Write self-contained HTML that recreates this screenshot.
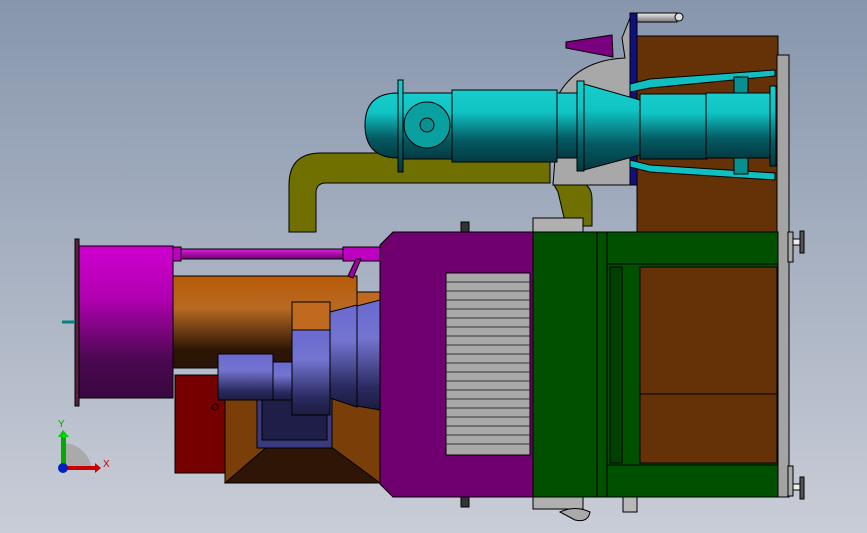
<!DOCTYPE html>
<html><head><meta charset="utf-8"><style>
html,body{margin:0;padding:0;width:867px;height:533px;overflow:hidden}
svg{display:block}
</style></head><body>
<svg width="867" height="533" viewBox="0 0 867 533" xmlns="http://www.w3.org/2000/svg" stroke="#000" stroke-width="1">
<defs>
<linearGradient id="bg" x1="0" y1="0" x2="0" y2="1"><stop offset="0" stop-color="#8796ad"/><stop offset="1" stop-color="#c9cdd7"/></linearGradient>
<linearGradient id="cy" x1="0" y1="0" x2="0" y2="1"><stop offset="0" stop-color="#17cccc"/><stop offset=".3" stop-color="#10c4c4"/><stop offset=".7" stop-color="#055a62"/><stop offset="1" stop-color="#033a42"/></linearGradient>
<linearGradient id="mg" x1="0" y1="0" x2="0" y2="1"><stop offset="0" stop-color="#d000d0"/><stop offset=".35" stop-color="#b000b0"/><stop offset=".75" stop-color="#4a0850"/><stop offset="1" stop-color="#3a0840"/></linearGradient>
<linearGradient id="or" x1="0" y1="0" x2="0" y2="1"><stop offset="0" stop-color="#b85a08"/><stop offset=".35" stop-color="#b86a22"/><stop offset=".8" stop-color="#2e1505"/><stop offset="1" stop-color="#2a1408"/></linearGradient>
<linearGradient id="bl" x1="0" y1="0" x2="0" y2="1"><stop offset="0" stop-color="#6a6ad0"/><stop offset=".35" stop-color="#7474d0"/><stop offset=".8" stop-color="#2a2a60"/><stop offset="1" stop-color="#1c1c40"/></linearGradient>
<linearGradient id="rod" x1="0" y1="0" x2="0" y2="1"><stop offset="0" stop-color="#e020e0"/><stop offset="1" stop-color="#700070"/></linearGradient>
<linearGradient id="pin" x1="0" y1="0" x2="0" y2="1"><stop offset="0" stop-color="#eee"/><stop offset="1" stop-color="#777"/></linearGradient>
</defs>
<rect width="867" height="533" fill="url(#bg)" stroke="none"/>

<path d="M289 232 V185 Q289 153 321 153 H550 V183 H326 Q316 183 316 193 V232 Z" fill="#707000"/>
<path d="M553 183 H578 Q592 183 592 200 V226 H566 L558 192 Z" fill="#707000"/>

<path d="M560 92 Q580 60 625 58 L622 38 L632 13 H637 V185 H553 Z" fill="#a8a8a8"/>
<polygon points="566,42 612,35 613,57 566,48" fill="#7a0080"/>
<rect x="637" y="13" width="40" height="9" fill="url(#pin)"/>
<circle cx="679" cy="17" r="4" fill="#ddd"/>

<rect x="637" y="36" width="141" height="200" fill="#653208"/>
<rect x="777" y="55" width="12" height="442" fill="#a4a4a4"/>
<rect x="630" y="13" width="7" height="172" fill="#101080"/>

<path d="M398 93 Q365 93 365 125 Q365 158 398 158 Z" fill="url(#cy)"/>
<rect x="398" y="93" width="57" height="66" fill="url(#cy)"/>
<rect x="398" y="80" width="5" height="92" fill="url(#cy)"/>
<circle cx="427" cy="125" r="23" fill="#0aa0a0"/>
<circle cx="427" cy="125" r="7" fill="#0a9090"/>
<rect x="452" y="90" width="105" height="72" fill="url(#cy)"/>
<rect x="557" y="93" width="20" height="65" fill="url(#cy)"/>
<rect x="577" y="81" width="7" height="90" fill="url(#cy)"/>
<polygon points="584,84 640,100 640,155 584,170" fill="url(#cy)"/>
<rect x="640" y="94" width="67" height="65" fill="url(#cy)"/>
<rect x="706" y="93" width="66" height="65" fill="url(#cy)"/>
<rect x="770" y="86" width="6" height="80" fill="url(#cy)"/>
<polygon points="630,84 650,79 775,70 775,76 650,88 630,92" fill="#10c0c0"/>
<polygon points="630,160 650,165 775,173 775,180 650,172 630,167" fill="#10c0c0"/>
<rect x="734" y="77" width="14" height="16" fill="#089090"/>
<rect x="734" y="158" width="14" height="16" fill="#089090"/>

<rect x="75" y="239" width="4" height="167" fill="#5a2040"/>
<rect x="79" y="246" width="94" height="152" fill="url(#mg)"/>
<line x1="62" y1="322" x2="75" y2="322" stroke="#0a8080" stroke-width="3"/>
<rect x="173" y="276" width="184" height="92" fill="url(#or)"/>
<rect x="173" y="249" width="207" height="10" fill="url(#rod)"/>
<rect x="173" y="247" width="8" height="14" fill="#c000c0"/>
<rect x="343" y="247" width="37" height="14" fill="#c000c0"/>
<polygon points="348,276 356,259 361,259 353,278" fill="#a000a0"/>
<rect x="357" y="292" width="23" height="14" fill="#c06a20"/>
<rect x="175" y="375" width="50" height="98" fill="#740000"/>
<circle cx="215" cy="407" r="3" fill="none"/>
<rect x="225" y="368" width="155" height="115" fill="#7a3e08"/>
<polygon points="225,483 268,446 330,446 380,483" fill="#2e1505"/>
<rect x="257" y="398" width="75" height="50" fill="#3a3a80"/>
<rect x="262" y="400" width="65" height="40" fill="#1e1e48"/>
<polygon points="330,312 357,305 357,407 330,398" fill="url(#bl)"/>
<polygon points="357,306 380,300 380,410 357,406" fill="url(#bl)"/>
<rect x="218" y="354" width="55" height="46" fill="url(#bl)"/>
<rect x="273" y="362" width="20" height="38" fill="url(#bl)"/>
<rect x="292" y="330" width="38" height="85" fill="url(#bl)"/>
<rect x="292" y="302" width="38" height="28" fill="#c06a20"/>

<polygon points="393,232 533,232 533,497 393,497 380,484 380,245" fill="#700070"/>
<rect x="446" y="273" width="84" height="182" fill="#a8a8a8"/>
<g stroke="#333" stroke-width="1">
<line x1="446" y1="282" x2="530" y2="282"/><line x1="446" y1="291" x2="530" y2="291"/><line x1="446" y1="300" x2="530" y2="300"/><line x1="446" y1="309" x2="530" y2="309"/><line x1="446" y1="318" x2="530" y2="318"/><line x1="446" y1="327" x2="530" y2="327"/><line x1="446" y1="336" x2="530" y2="336"/><line x1="446" y1="345" x2="530" y2="345"/><line x1="446" y1="354" x2="530" y2="354"/><line x1="446" y1="363" x2="530" y2="363"/><line x1="446" y1="372" x2="530" y2="372"/><line x1="446" y1="381" x2="530" y2="381"/><line x1="446" y1="390" x2="530" y2="390"/><line x1="446" y1="399" x2="530" y2="399"/><line x1="446" y1="408" x2="530" y2="408"/><line x1="446" y1="417" x2="530" y2="417"/><line x1="446" y1="426" x2="530" y2="426"/><line x1="446" y1="435" x2="530" y2="435"/><line x1="446" y1="444" x2="530" y2="444"/>
</g>
<rect x="461" y="222" width="8" height="10" fill="#333"/>
<rect x="461" y="497" width="8" height="10" fill="#333"/>

<rect x="533" y="218" width="50" height="14" fill="#b0b0b0"/>
<rect x="533" y="497" width="50" height="12" fill="#b0b0b0"/>
<path d="M560 512 Q575 505 590 512 Q588 523 575 520 Z" fill="#aaa"/>
<rect x="533" y="232" width="245" height="265" fill="#005000"/>
<rect x="640" y="267" width="137" height="196" fill="#653208"/>
<line x1="640" y1="394" x2="777" y2="394"/>
<rect x="610" y="267" width="12" height="196" fill="#004000"/>
<line x1="597" y1="232" x2="597" y2="497"/><line x1="607" y1="232" x2="607" y2="497"/>
<line x1="607" y1="264" x2="778" y2="264"/><line x1="607" y1="465" x2="778" y2="465"/>
<rect x="623" y="497" width="14" height="15" fill="#b8b8b8"/>
<rect x="788" y="232" width="5" height="30" fill="#aaa"/><rect x="788" y="466" width="5" height="30" fill="#aaa"/>
<rect x="793" y="239" width="8" height="6" fill="#eee"/><rect x="800" y="231" width="4" height="22" fill="#555"/>
<rect x="793" y="484" width="8" height="6" fill="#eee"/><rect x="800" y="477" width="4" height="22" fill="#555"/>

<path d="M65 443 A30 30 0 0 1 92 470 L65 470 Z" fill="#aaa" stroke="none"/>
<rect x="61" y="437" width="5" height="30" fill="#0a0" stroke="none"/>
<polygon points="58,437 63,430 69,437" fill="#0c0" stroke="none"/>
<rect x="65" y="466" width="30" height="4" fill="#c00" stroke="none"/>
<polygon points="95,463 101,468 95,473" fill="#c00" stroke="none"/>
<circle cx="63" cy="468" r="5" fill="#0020c0" stroke="none"/>
<text x="58" y="427" font-family="Liberation Sans,sans-serif" font-size="10" fill="#0a0" stroke="none">Y</text>
<text x="103" y="467" font-family="Liberation Sans,sans-serif" font-size="10" fill="#c00" stroke="none">X</text>
</svg>
</body></html>
